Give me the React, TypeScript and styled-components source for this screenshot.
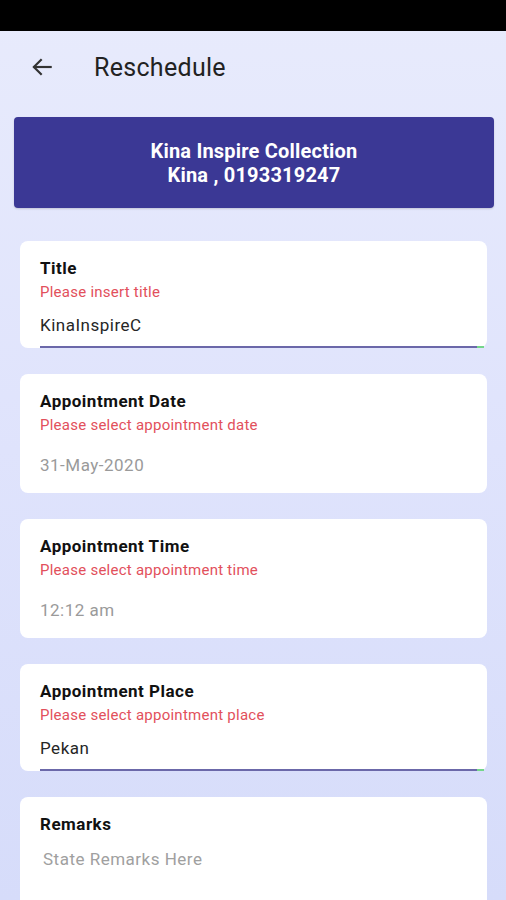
import React from 'react';
import styled, { createGlobalStyle } from 'styled-components';

const GlobalStyle = createGlobalStyle`
  html, body {
    margin: 0;
    padding: 0;
  }
  body {
    font-family: Roboto, "Noto Sans", "Liberation Sans", sans-serif;
    overflow: hidden;
  }
`;

const Page = styled.div`
  width: 506px;
  height: 900px;
  overflow: hidden;
  background: linear-gradient(180deg, #e8ebfc 0%, #dfe3fc 50%, #d6dcfa 100%);
`;

const StatusBar = styled.div`
  height: 31px;
  background: #000;
`;

const Header = styled.div`
  display: flex;
  align-items: center;
  height: 72px;
  padding-left: 29px;
`;

const BackButton = styled.div`
  display: flex;
  width: 26px;
  height: 26px;
  color: #333;
`;

const Title = styled.div`
  margin-left: 39px;
  font-size: 25px;
  color: #222;
  letter-spacing: 0.3px;
`;

const Banner = styled.div`
  margin: 14px 12px 0 14px;
  height: 91px;
  border-radius: 4px;
  background: #3b3895;
  box-shadow: 0 1px 2px rgba(0, 0, 0, 0.15);
  display: flex;
  flex-direction: column;
  justify-content: center;
  align-items: center;
  color: #fff;
  font-weight: 700;
  font-size: 20px;
  line-height: 24px;
  letter-spacing: 0.2px;
`;

const List = styled.div`
  display: flex;
  flex-direction: column;
  gap: 26px;
  padding: 33px 19px 0 20px;
`;

const Card = styled.div<{ $pb?: number }>`
  background: #fff;
  border-radius: 8px;
  padding: 17px 3px ${(p) => p.$pb ?? 0}px 20px;
`;

const Label = styled.div`
  font-size: 17px;
  line-height: 21px;
  font-weight: 700;
  color: #111;
  letter-spacing: 0.5px;
`;

const Hint = styled.div`
  margin-top: 4px;
  font-size: 15px;
  line-height: 19px;
  color: #e2505c;
  letter-spacing: 0.25px;
`;

const Value = styled.div<{ $muted?: boolean; $gap: number }>`
  margin-top: ${(p) => p.$gap}px;
  font-size: 17px;
  line-height: 22px;
  letter-spacing: 0.5px;
  color: ${(p) => (p.$muted ? '#9a9a9a' : '#262626')};
`;

const Underline = styled.div`
  margin-top: 10px;
  height: 2px;
  background: linear-gradient(90deg, #6b68a9 0%, #6b68a9 98.4%, #74d68a 98.4%);
`;

const Placeholder = styled.div`
  margin-top: 13px;
  margin-left: 3px;
  font-size: 17px;
  line-height: 22px;
  letter-spacing: 0.5px;
  color: #a0a0a0;
  height: 80px;
`;

const BackArrow = () => (
  <svg width="26" height="26" viewBox="0 0 24 24" fill="none" stroke="currentColor" strokeWidth="2" strokeLinecap="square">
    <path d="M20 12H5" />
    <path d="M11 5.5L4.5 12L11 18.5" strokeLinejoin="miter" />
  </svg>
);

type Field = {
  label: string;
  hint: string;
  value: string;
  kind: 'input' | 'picker';
};

const fields: Field[] = [
  { label: 'Title', hint: 'Please insert title', value: 'KinaInspireC', kind: 'input' },
  { label: 'Appointment Date', hint: 'Please select appointment date', value: '31-May-2020', kind: 'picker' },
  { label: 'Appointment Time', hint: 'Please select appointment time', value: '12:12 am', kind: 'picker' },
  { label: 'Appointment Place', hint: 'Please select appointment place', value: 'Pekan', kind: 'input' },
];

export default function App() {
  return (
    <>
      <GlobalStyle />
      <Page>
        <StatusBar />
        <Header>
          <BackButton>
            <BackArrow />
          </BackButton>
          <Title>Reschedule</Title>
        </Header>
        <Banner>
          <div>Kina Inspire Collection</div>
          <div>Kina , 0193319247</div>
        </Banner>
        <List>
          {fields.map((f) =>
            f.kind === 'input' ? (
              <Card key={f.label}>
                <Label>{f.label}</Label>
                <Hint>{f.hint}</Hint>
                <Value $gap={12}>{f.value}</Value>
                <Underline />
              </Card>
            ) : (
              <Card key={f.label} $pb={17}>
                <Label>{f.label}</Label>
                <Hint>{f.hint}</Hint>
                <Value $gap={19} $muted>
                  {f.value}
                </Value>
              </Card>
            )
          )}
          <Card>
            <Label>Remarks</Label>
            <Placeholder>State Remarks Here</Placeholder>
          </Card>
        </List>
      </Page>
    </>
  );
}
